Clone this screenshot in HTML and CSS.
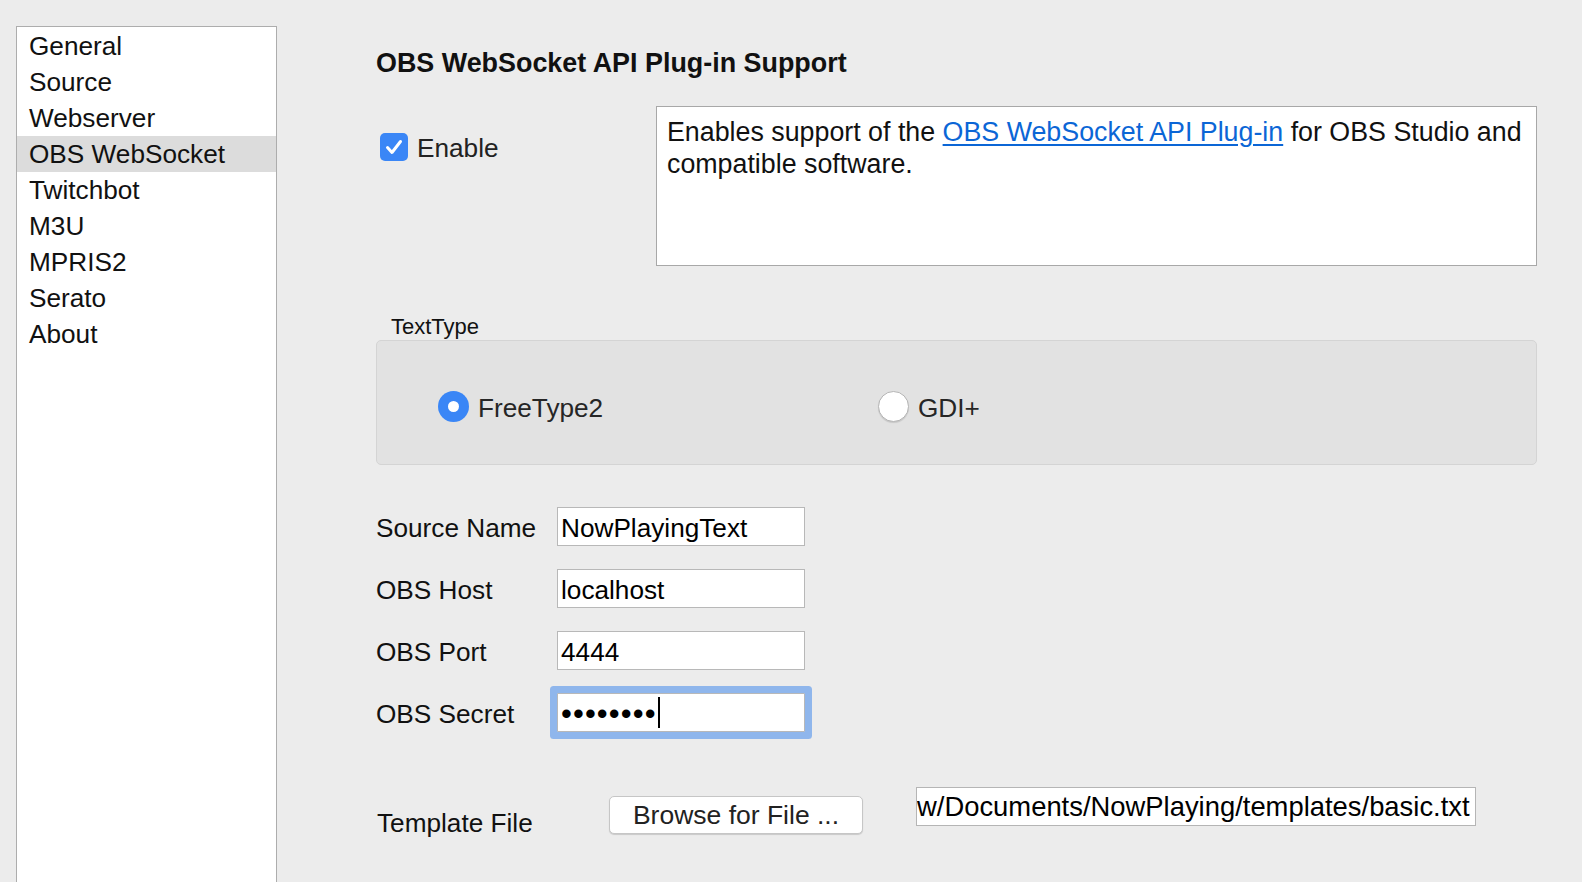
FILE: index.html
```html
<!DOCTYPE html>
<html lang="en">
<head>
<meta charset="utf-8">
<title>OBS WebSocket Settings</title>
<link rel="stylesheet" href="styles.css">
</head>
<body>
<div class="window">
  <nav class="sidebar">
    <div class="nav-item">General</div>
    <div class="nav-item">Source</div>
    <div class="nav-item">Webserver</div>
    <div class="nav-item selected">OBS WebSocket</div>
    <div class="nav-item">Twitchbot</div>
    <div class="nav-item">M3U</div>
    <div class="nav-item">MPRIS2</div>
    <div class="nav-item">Serato</div>
    <div class="nav-item">About</div>
  </nav>
  <main class="main">
    <h1 class="title">OBS WebSocket API Plug-in Support</h1>
    <div class="enable-row">
      <label class="check">
        <span class="checkbox"><svg width="28" height="28" viewBox="0 0 28 28"><path d="M7.5 14.5 L12 19.5 L20.5 8.5" fill="none" stroke="#fff" stroke-width="3" stroke-linecap="round" stroke-linejoin="round"/></svg></span>
        <span class="check-text">Enable</span>
      </label>
      <div class="desc"><div class="line"><span>Enables support of the</span> <a href="#">OBS WebSocket API Plug-in</a> <span>for OBS Studio and</span></div><div class="line"><span>compatible software.</span></div></div>
    </div>
    <div class="group-title">TextType</div>
    <div class="group">
      <label class="radio-item first"><span class="radio on"></span><span>FreeType2</span></label>
      <label class="radio-item"><span class="radio off"></span><span>GDI+</span></label>
    </div>
    <div class="form">
      <div class="form-row"><span class="label">Source Name</span><div class="field">NowPlayingText</div></div>
      <div class="form-row"><span class="label">OBS Host</span><div class="field">localhost</div></div>
      <div class="form-row"><span class="label">OBS Port</span><div class="field">4444</div></div>
      <div class="form-row"><span class="label">OBS Secret</span><div class="field focus"><span class="dots">••••••••</span><span class="caret"></span></div></div>
    </div>
    <div class="template-row">
      <span class="tlabel">Template File</span>
      <div class="button">Browse for File ...</div>
      <div class="path">w/Documents/NowPlaying/templates/basic.txt</div>
    </div>
  </main>
</div>
</body>
</html>
```
FILE: styles.css
```css
html, body {
  margin: 0;
  padding: 0;
}
body {
  background: #ececec;
  font-family: "Liberation Sans", Arial, sans-serif;
  color: #111;
}
.window {
  display: flex;
  height: 882px;
  overflow: hidden;
}
.sidebar {
  margin: 26px 0 0 16px;
  width: 259px;
  border: 1px solid #adadad;
  border-bottom: none;
  background: #fff;
  padding-top: 1px;
  flex-shrink: 0;
}
.nav-item {
  height: 36px;
  line-height: 36px;
  padding-left: 12px;
  font-size: 26.2px;
  color: #111;
  white-space: nowrap;
}
.nav-item.selected {
  background: #dcdcdc;
}
.main {
  margin-left: 99px;
  width: 1161px;
  padding-top: 48px;
}
.title {
  margin: 0;
  font-size: 26.9px;
  font-weight: bold;
  line-height: 30px;
  color: #111;
}
.enable-row {
  display: flex;
  margin-top: 28px;
  height: 160px;
}
.check {
  width: 280px;
  box-sizing: border-box;
  padding-left: 4px;
  margin-top: 27px;
  height: 28px;
  display: flex;
  align-items: center;
  gap: 9px;
  font-size: 26.2px;
  color: #222;
}
.checkbox {
  width: 28px;
  height: 28px;
  border-radius: 5px;
  background: #3a86f6;
  display: flex;
  align-items: center;
  justify-content: center;
  flex-shrink: 0;
}
.check-text {
  padding-top: 2px;
}
.desc {
  width: 881px;
  height: 160px;
  box-sizing: border-box;
  border: 1px solid #a8a8a8;
  background: #fff;
  padding: 9px 10px;
  font-size: 26.8px;
  line-height: 32px;
  color: #111;
}
.desc .line {
  white-space: nowrap;
}
.desc a {
  color: #0b66d6;
  text-decoration: underline;
  text-underline-offset: 3px;
}
.group-title {
  margin-top: 48px;
  margin-left: 15px;
  font-size: 22px;
  line-height: 26px;
  color: #111;
}
.group {
  height: 125px;
  box-sizing: border-box;
  border: 1px solid #d4d4d4;
  border-radius: 5px;
  background: #e2e2e2;
  padding: 50px 0 0 61px;
  display: flex;
  align-items: flex-start;
}
.radio-item {
  display: flex;
  align-items: center;
  gap: 9px;
  height: 31px;
  font-size: 26.2px;
  color: #262626;
}
.radio-item span:last-child {
  padding-top: 3px;
}
.radio-item.first {
  width: 440px;
}
.radio {
  width: 31px;
  height: 31px;
  border-radius: 50%;
  box-sizing: border-box;
  display: flex;
  align-items: center;
  justify-content: center;
  flex-shrink: 0;
}
.radio-item .radio {
  padding-top: 0;
}
.radio.on {
  background: #3a86f6;
}
.radio.on::after {
  content: "";
  width: 11px;
  height: 11px;
  border-radius: 50%;
  background: #fff;
}
.radio.off {
  background: #fff;
  border: 1px solid #b5b5b5;
  box-shadow: 0 1px 1px rgba(0, 0, 0, 0.12);
}
.form {
  margin-top: 42px;
  display: flex;
  flex-direction: column;
  gap: 23px;
}
.form-row {
  display: flex;
  align-items: flex-start;
  height: 39px;
}
.label {
  width: 181px;
  box-sizing: border-box;
  padding-top: 4px;
  font-size: 26.2px;
  line-height: 35px;
  color: #111;
}
.field {
  width: 248px;
  height: 39px;
  box-sizing: border-box;
  border: 1px solid #b8b8b8;
  background: #fff;
  padding: 4px 0 0 3px;
  font-size: 26.2px;
  line-height: 33px;
  color: #000;
  white-space: nowrap;
  overflow: hidden;
}
.field.focus {
  box-shadow: 0 0 0 7px #8fb6ec;
  border-radius: 1px;
  display: flex;
  align-items: center;
  padding-top: 0;
  overflow: visible;
}
.dots {
  font-size: 31px;
  letter-spacing: 1.1px;
  line-height: 1;
  color: #000;
  padding-top: 2px;
}
.caret {
  display: inline-block;
  width: 2px;
  height: 31px;
  background: #000;
  margin-left: 1px;
}
.template-row {
  display: flex;
  align-items: flex-start;
  margin-top: 55px;
}
.tlabel {
  width: 233px;
  margin-top: 17px;
  line-height: 39px;
  font-size: 26.2px;
  color: #111;
  padding-left: 1px;
  box-sizing: border-box;
}
.button {
  margin-top: 9px;
  width: 254px;
  height: 38px;
  box-sizing: border-box;
  border: 1px solid #c6c6c6;
  border-radius: 5px;
  background: #fff;
  box-shadow: 0 1px 1px rgba(0, 0, 0, 0.15);
  font-size: 26.5px;
  color: #222;
  display: flex;
  align-items: center;
  justify-content: center;
}
.path {
  margin-left: 53px;
  width: 560px;
  height: 39px;
  box-sizing: border-box;
  border: 1px solid #b5b5b5;
  background: #fff;
  padding-top: 1px;
  font-size: 27.4px;
  line-height: 36px;
  overflow: hidden;
  white-space: nowrap;
  color: #000;
}
```
